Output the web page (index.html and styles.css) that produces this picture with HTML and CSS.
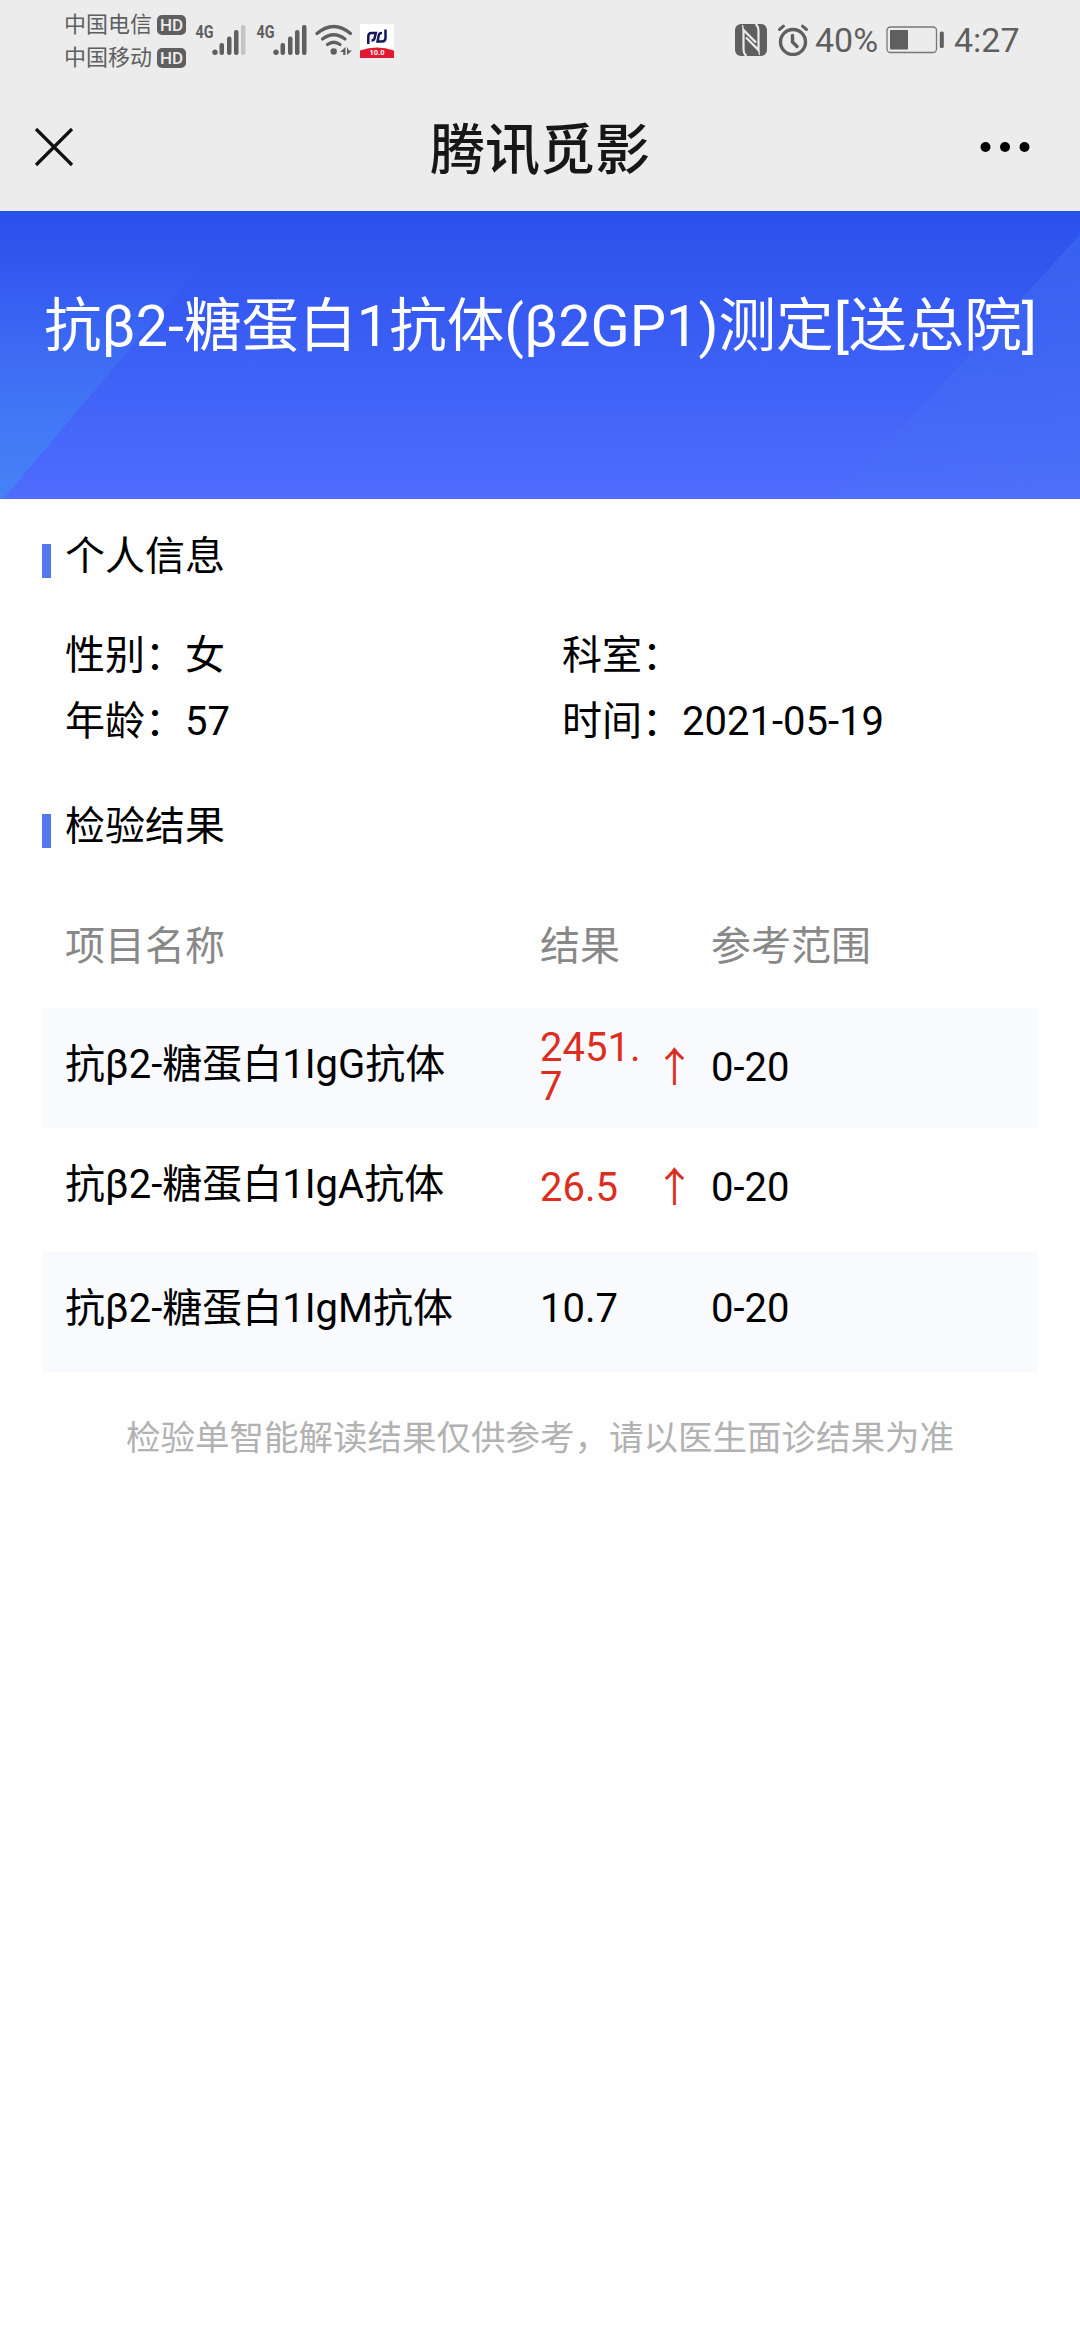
FILE: index.html
```html
<!DOCTYPE html>
<html lang="zh-CN">
<head>
    <meta charset="UTF-8">
    <meta name="viewport" content="width=device-width, initial-scale=1.0">
    <title>腾讯觅影</title>
    <link rel="stylesheet" href="styles.css">
</head>
<body>
    <div class="status-bar">
        <div class="carriers">
            <div class="carrier">中国电信<span class="hd">HD</span></div>
            <div class="carrier">中国移动<span class="hd">HD</span></div>
        </div>
        <svg class="signals" width="204" height="40" viewBox="192 21 204 40">
            <g fill="#5f5f5f">
                <text class="net" x="195.500" y="38" textLength="18" lengthAdjust="spacingAndGlyphs">4G</text>
                <circle cx="215" cy="52.200" r="2.700"/>
                <rect x="219.500" y="43" width="4.500" height="12" rx="2"/>
                <rect x="227" y="36.500" width="4.500" height="18.500" rx="2"/>
                <rect x="234" y="30" width="4.500" height="25" rx="2"/>
                <rect x="241" y="25" width="4.500" height="30" rx="2" fill="#c4c4c4"/>
                <text class="net" x="256.500" y="38" textLength="18" lengthAdjust="spacingAndGlyphs">4G</text>
                <circle cx="276" cy="52.200" r="2.700"/>
                <rect x="280.500" y="43" width="4.500" height="12" rx="2"/>
                <rect x="288" y="36.500" width="4.500" height="18.500" rx="2"/>
                <rect x="295" y="30" width="4.500" height="25" rx="2"/>
                <rect x="302" y="25" width="4.500" height="30" rx="2"/>
                <circle cx="333.700" cy="51.500" r="3.200"/>
                <path d="M340 52l5.500-5v8h-2.300v-3zM347 47v8l5-4.500h-3z"/>
            </g>
            <g fill="none" stroke="#5f5f5f" stroke-width="3.200" stroke-linecap="round">
                <path d="M317 33.500Q333.700 19.500 350.500 33.500"/>
                <path d="M322.500 39Q333.700 30.500 345 39"/>
                <path d="M327.500 44.500Q333.700 40 340 44.500"/>
            </g>
            <rect x="360" y="24" width="34" height="34" fill="#fff"/>
            <path d="M360 50.500Q377 44.500 394 50.500V58H360z" fill="#e01832"/>
            <path d="M368.300 44V36.500Q368.300 33 371.500 33H375.800L374.500 38.500Q374 40.500 371.500 40.500M385.500 29.500V37.500Q385.500 41.500 382 41.500H377.500L378.800 35Q379.300 33 382 33" fill="none" stroke="#15155c" stroke-width="2.500"/>
            <text class="app-label" x="369.500" y="55" textLength="15" lengthAdjust="spacingAndGlyphs">10.0</text>
        </svg>
        <div class="status-right">
            <svg class="nfc" width="32" height="32" viewBox="0 0 32 32">
                <rect width="32" height="32" rx="6" fill="#5f5f5f"/>
                <path d="M11.500 32Q8.500 30 8.500 25V6L21 18.500M20.500 0Q23.500 2 23.500 7V26L11 13.500" fill="none" stroke="#ececec" stroke-width="2.200"/>
                <path d="M8.500 6L7.500 1M23.500 26L24.500 31" stroke="#ececec" stroke-width="1.200"/>
            </svg>
            <svg class="alarm" width="32" height="32" viewBox="0 0 32 32">
                <g fill="none" stroke="#5f5f5f" stroke-width="3.400" stroke-linecap="round">
                    <circle cx="16" cy="18" r="12.500"/>
                    <path d="M15.500 11.500V18L20 22.500"/>
                    <path d="M2.500 5.500L6.500 2.200M29.500 5.500L25.500 2.200" stroke-width="3"/>
                </g>
            </svg>
            <span class="percent">40%</span>
            <svg class="battery" width="60" height="28" viewBox="0 0 60 28">
                <rect x="1" y="1" width="49.500" height="25.500" rx="3.500" fill="none" stroke="#777" stroke-width="1.300"/>
                <rect x="4" y="4" width="18" height="19.500" rx="1" fill="#5f5f5f"/>
                <rect x="53.800" y="5.500" width="4" height="16.500" rx="1.500" fill="#5f5f5f"/>
            </svg>
            <span class="clock">4:27</span>
        </div>
    </div>

    <div class="nav-bar">
        <svg class="close" width="40" height="40" viewBox="0 0 40 40">
            <path d="M2 2L38 38M38 2L2 38" stroke="#111" stroke-width="3.200"/>
        </svg>
        <h1>腾讯觅影</h1>
        <svg class="more" width="50" height="12" viewBox="0 0 50 12">
            <circle cx="5.500" cy="6" r="5"/>
            <circle cx="25" cy="6" r="5"/>
            <circle cx="44.500" cy="6" r="5"/>
        </svg>
    </div>

    <div class="banner">
        <svg class="banner-bg" width="1080" height="288" viewBox="0 0 1080 288">
            <defs>
                <linearGradient id="left-shade" x1="0" y1="0" x2="0" y2="1">
                    <stop offset=".15" stop-color="#3f90f0" stop-opacity="0"/>
                    <stop offset="1" stop-color="#3f90f0" stop-opacity=".6"/>
                </linearGradient>
                <linearGradient id="right-shade" x1="1" y1="0" x2=".6" y2="1">
                    <stop offset="0" stop-color="#4c80f0" stop-opacity=".3"/>
                    <stop offset="1" stop-color="#4c80f0" stop-opacity=".1"/>
                </linearGradient>
            </defs>
            <path d="M0 0H246L3 288H0z" fill="url(#left-shade)"/>
            <path d="M1080 24V288H836z" fill="url(#right-shade)"/>
        </svg>
        <h2>抗β2-糖蛋白1抗体(β2GP1)测定[送总院]</h2>
    </div>

    <div class="content">
        <h3 class="section-title">个人信息</h3>
        <div class="info">
            <div>性别：女</div>
            <div>科室：</div>
            <div>年龄：57</div>
            <div>时间：2021-05-19</div>
        </div>

        <h3 class="section-title">检验结果</h3>
        <div class="results">
            <div class="row head">
                <div class="name">项目名称</div>
                <div class="value">结果</div>
                <div class="flag"></div>
                <div class="range">参考范围</div>
            </div>
            <div class="row shaded">
                <div class="name">抗β2-糖蛋白1IgG抗体</div>
                <div class="value high">2451.7</div>
                <div class="flag">↑</div>
                <div class="range">0-20</div>
            </div>
            <div class="row plain">
                <div class="name">抗β2-糖蛋白1IgA抗体</div>
                <div class="value high">26.5</div>
                <div class="flag">↑</div>
                <div class="range">0-20</div>
            </div>
            <div class="row shaded last">
                <div class="name">抗β2-糖蛋白1IgM抗体</div>
                <div class="value">10.7</div>
                <div class="flag"></div>
                <div class="range">0-20</div>
            </div>
        </div>
        <p class="notice">检验单智能解读结果仅供参考，请以医生面诊结果为准</p>
    </div>
</body>
</html>
```
FILE: styles.css
```css
* {
    box-sizing: border-box;
}
body {
    margin: 0;
    min-height: 2340px;
    background-color: #fefefe;
    color: #000;
    font-family: Roboto, "Noto Sans CJK SC", sans-serif;
    font-size: 40px;
}
h1, h2, h3, p {
    margin: 0;
    font-weight: normal;
}
svg {
    display: block;
    flex-shrink: 0;
}

/* phone status bar */
.status-bar {
    display: flex;
    align-items: flex-start;
    height: 84px;
    padding-left: 64px;
    background-color: #ececec;
    color: #5f5f5f;
}
.carriers {
    width: 128px;
    padding-top: 8px;
}
.carrier {
    display: flex;
    align-items: center;
    height: 33px;
    font-size: 22px;
    line-height: 33px;
}
.hd {
    width: 29px;
    height: 20px;
    margin-left: 5px;
    border-radius: 5px;
    background-color: #5f5f5f;
    color: #ececec;
    font-size: 17px;
    font-weight: 500;
    line-height: 20px;
    text-align: center;
}
.signals {
    margin-top: 21px;
}
.net {
    font-size: 18px;
    font-weight: 700;
}
.app-label {
    fill: #fff;
    font-size: 7px;
    font-weight: 700;
}
.status-right {
    display: flex;
    align-items: center;
    height: 40px;
    margin-top: 20px;
    margin-left: 339px;
    font-size: 34px;
    line-height: 40px;
}
.alarm {
    margin-left: 10px;
}
.percent {
    width: 64px;
    margin-left: 6px;
}
.battery {
    margin-left: 7px;
}
.clock {
    margin-left: 8px;
}

/* title bar */
.nav-bar {
    display: grid;
    grid-template-columns: 1fr auto 1fr;
    align-items: center;
    height: 127px;
    padding: 0 50px 2px 34px;
    background-color: #ececec;
    color: #171717;
}
.nav-bar h1 {
    padding: 7px 0 0 16px;
    font-size: 55px;
    font-weight: 500;
    line-height: 64px;
}
.more {
    justify-self: end;
}

/* banner */
.banner {
    position: relative;
    height: 288px;
    padding-top: 79px;
    background: linear-gradient(#2a51ec, #4e6dfd);
    color: #fff;
}
.banner-bg {
    position: absolute;
    top: 0;
    left: 0;
}
.banner h2 {
    position: relative;
    padding-left: 44px;
    font-size: 57.600px;
    line-height: 74px;
    white-space: nowrap;
}

.content {
    padding: 28px 42px 0;
}
.section-title {
    display: flex;
    align-items: center;
    height: 60px;
    font-size: 40px;
    line-height: 60px;
}
.section-title::before {
    content: "";
    width: 9px;
    height: 34px;
    margin-top: 8px;
    margin-right: 14px;
    background-color: #5677ee;
}
.info {
    display: grid;
    grid-template-columns: 497px 1fr;
    padding: 36px 0 42px 23px;
    line-height: 66px;
}

/* result table */
.results {
    padding-top: 28px;
}
.row {
    display: grid;
    grid-template-columns: 475px 114px 57px 1fr;
    align-items: center;
    height: 120px;
    padding-bottom: 2px;
    padding-left: 23px;
    line-height: 39px;
}
.head {
    height: 123px;
    padding-bottom: 0;
    color: #888;
}
.shaded {
    background-color: #f9fafe;
}
.plain {
    height: 124px;
    padding-bottom: 6px;
}
.last {
    padding-bottom: 8px;
}
.row .name {
    padding-bottom: 6px;
}
.head .name, .last .name {
    padding-bottom: 0;
}
.row .value {
    width: 112px;
    word-break: break-all;
}
.row .high, .flag {
    color: #dc2d20;
}
.flag {
    padding-bottom: 6px;
    font-family: "Noto Sans CJK SC", sans-serif;
    font-size: 41px;
}
.notice {
    padding-top: 40px;
    color: #b2b2b2;
    font-size: 34.500px;
    line-height: 52px;
    text-align: center;
}
```
